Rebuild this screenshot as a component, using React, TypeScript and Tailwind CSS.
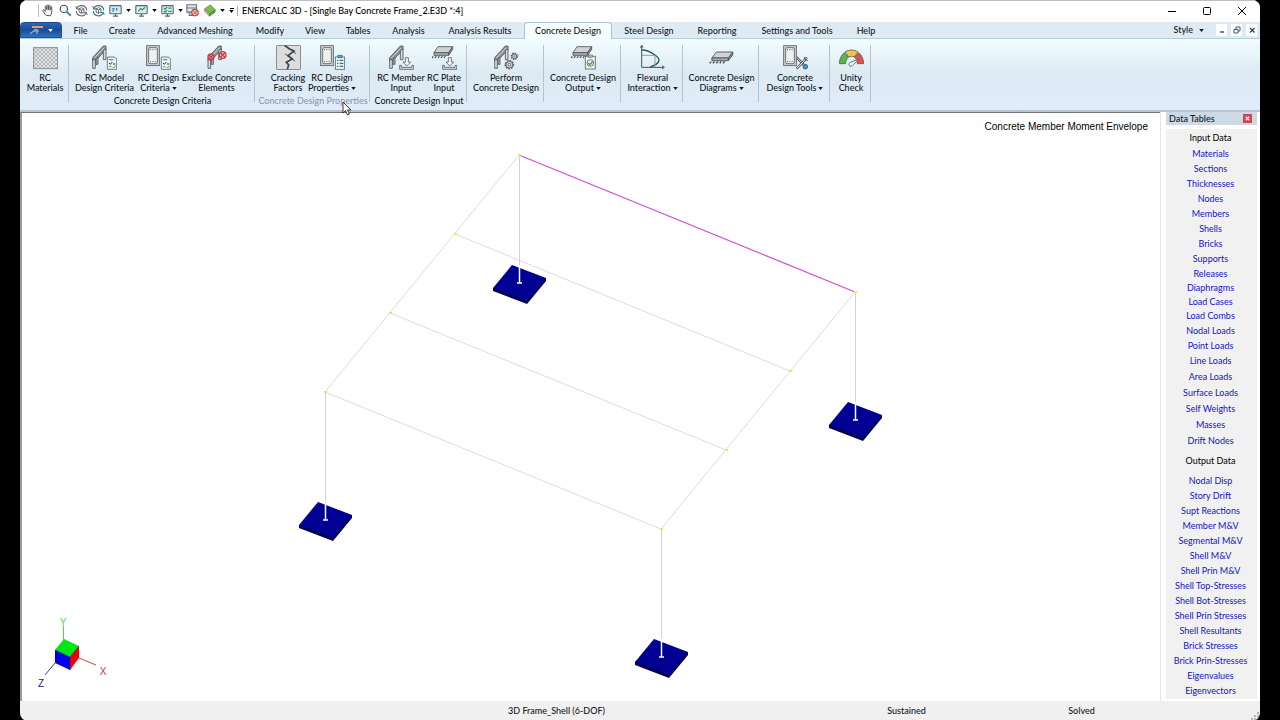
import type { ReactNode } from "react";

/* ---------- Ribbon icons (75 x 75 grid) ---------- */

function RibbonIcon({ children }: { children: ReactNode }) {
  return (
    <svg viewBox="0 0 75 75" className="h-[25px] w-[25px]" fill="none" aria-hidden="true">
      {children}
    </svg>
  );
}

function Frame() {
  return (
    <g stroke="#4d5359" strokeWidth="2.5" strokeLinejoin="round">
      <path d="M2 38 L34 3 H42 V14 L10 48 H2 Z" fill="#8b9299" />
      <path d="M2 44 V70 H10 V44 Z" fill="#d5d8db" />
      <path d="M12 42 V58 H18 V36 Z" fill="#aab0b5" />
      <path d="M34 16 V44 H42 V12 Z" fill="#d5d8db" />
      <path d="M8 38 L37 8" stroke="#dfe3e6" />
    </g>
  );
}

function Slab() {
  return (
    <g stroke="#4d5359" strokeWidth="2.5" strokeLinejoin="round">
      <path d="M18 5 H62 L50 23 H6 Z" fill="#d0d3d6" />
      <path d="M6 23 H50 V31 H6 Z" fill="#a8adb2" />
      <path d="M50 23 L62 5 V13 L50 31 Z" fill="#858b91" />
      <path d="M4 34 L0 39 M13 33 L9 39 M22 33 L18 39 M31 33 L27 39 M40 33 L36 39" strokeWidth="4" />
    </g>
  );
}

function Section() {
  return (
    <g stroke="#5b6066" strokeWidth="2.5">
      <rect x="2" y="2" width="38" height="60" fill="#c9cdd0" />
      <rect x="8" y="8" width="26" height="48" rx="4" fill="#eef0f1" />
      <path d="M12 14 H31 M12 50 H31" strokeDasharray="3 4" strokeWidth="3" />
    </g>
  );
}

function Sheet() {
  return (
    <g stroke="#5d6b6d" strokeWidth="2.5">
      <path d="M46 36 H68 L74 42 V73 H46 Z" fill="#eaf4f0" />
      <path d="M51 44 H64" stroke="#3aa3c2" strokeWidth="4" />
      <path d="M51 54 l4 4 6 -7 M63 57 h7" stroke="#26353c" strokeWidth="3" />
      <path d="M51 65 h7 M62 66 l3 3 6 -7" stroke="#5d9c3b" strokeWidth="3" />
    </g>
  );
}

function Tray() {
  return (
    <g stroke="#5b6066" strokeWidth="2.5" strokeLinejoin="round">
      <path d="M49 38 H58 V51 H65 L53 63 L42 51 H49 Z" fill="#f5f7f8" />
      <path d="M32 61 V73 H74 V61 H69 V67 H37 V61 Z" fill="#d7dbde" />
    </g>
  );
}

function MaterialsIcon() {
  return (
    <RibbonIcon>
      <defs>
        <pattern id="rc-dots" width="12" height="12" patternUnits="userSpaceOnUse">
          <rect width="12" height="12" fill="#e2e3e4" />
          <rect width="6" height="6" fill="#b4b6b8" />
          <rect x="6" y="6" width="6" height="6" fill="#b4b6b8" />
        </pattern>
      </defs>
      <rect x="1" y="8" width="73" height="63" fill="url(#rc-dots)" stroke="#7d8184" strokeWidth="2.5" />
    </RibbonIcon>
  );
}

function ModelCriteriaIcon() {
  return (
    <RibbonIcon>
      <Frame />
      <Sheet />
    </RibbonIcon>
  );
}

function DesignCriteriaIcon() {
  return (
    <RibbonIcon>
      <Section />
      <Sheet />
    </RibbonIcon>
  );
}

function ExcludeIcon() {
  return (
    <RibbonIcon>
      <g transform="translate(10 0)">
        <Frame />
      </g>
      <g stroke="#c93f43" strokeWidth="4" fill="#eec0be" fillOpacity="0.7">
        <circle cx="21" cy="36" r="9" />
        <circle cx="56" cy="30" r="10" />
        <path d="M15 30 l12 12 M27 30 l-12 12 M49 23 l14 14 M63 23 l-14 14" />
      </g>
    </RibbonIcon>
  );
}

function CrackIcon() {
  return (
    <RibbonIcon>
      <rect x="1" y="1" width="73" height="73" rx="4" fill="#dcddde" stroke="#65696d" strokeWidth="2.5" />
      <path d="M26 2 L41 12 L54 18 L36 32 L49 42 L31 52 L38 60 L34 73" stroke="#3c4145" strokeWidth="5" />
      <path d="M50 20 L60 26 M36 32 L27 27 M48 42 L57 48" stroke="#3c4145" strokeWidth="2.5" />
    </RibbonIcon>
  );
}

function PropertiesIcon() {
  return (
    <RibbonIcon>
      <Section />
      <g stroke="#3f6d80" strokeWidth="2.5">
        <rect x="46" y="36" width="28" height="37" fill="#eff6f8" />
        <rect x="54" y="31" width="12" height="7" fill="#6aa8bf" />
        <path d="M51 46 h4 M59 46 h11 M51 55 h4 M59 55 h11 M51 64 h4 M59 64 h11" strokeWidth="4" />
      </g>
    </RibbonIcon>
  );
}

function MemberInputIcon() {
  return (
    <RibbonIcon>
      <Frame />
      <Tray />
    </RibbonIcon>
  );
}

function PlateInputIcon() {
  return (
    <RibbonIcon>
      <Slab />
      <Tray />
    </RibbonIcon>
  );
}

function PerformIcon() {
  return (
    <RibbonIcon>
      <Frame />
      <g stroke="#5b6066" fill="#dfe3e6">
        <circle cx="46" cy="59" r="12" strokeWidth="5" strokeDasharray="5 3" />
        <circle cx="46" cy="59" r="10" strokeWidth="3" />
        <circle cx="46" cy="59" r="4" strokeWidth="3" fill="#fff" />
        <circle cx="61" cy="34" r="9" strokeWidth="5" strokeDasharray="4 3" />
        <circle cx="61" cy="34" r="7" strokeWidth="3" />
        <circle cx="61" cy="34" r="2" strokeWidth="2" fill="#fff" />
      </g>
    </RibbonIcon>
  );
}

function OutputIcon() {
  return (
    <RibbonIcon>
      <Slab />
      <rect x="43" y="34" width="30" height="38" fill="#f1f4f3" stroke="#70777b" strokeWidth="3" />
      <rect x="52" y="30" width="12" height="7" fill="#abb1b5" stroke="#70777b" strokeWidth="2" />
      <circle cx="58" cy="54" r="10" stroke="#53615a" strokeWidth="2.5" />
      <path d="M52 54 l5 5 8 -10" stroke="#3b9a45" strokeWidth="4" />
    </RibbonIcon>
  );
}

function FlexuralIcon() {
  return (
    <RibbonIcon>
      <path d="M5 2 V67 H71" stroke="#43515a" strokeWidth="3" />
      <path d="M1 8 L5 1 L9 8 M66 62 L73 67 L66 72" stroke="#43515a" strokeWidth="3" />
      <path d="M6 15 C24 15 34 22 45 30 C66 45 58 56 31 66" stroke="#29584f" strokeWidth="4" />
      <path d="M6 31 H45 V66" stroke="#83a3ac" strokeWidth="3" />
    </RibbonIcon>
  );
}

function DiagramsIcon() {
  return (
    <RibbonIcon>
      <g transform="translate(2 16) scale(1.12 1)">
        <Slab />
      </g>
    </RibbonIcon>
  );
}

function ToolsIcon() {
  return (
    <RibbonIcon>
      <Section />
      <path d="M42 38 L68 66" stroke="#4f565c" strokeWidth="7" strokeLinecap="round" />
      <path d="M42 38 L68 66" stroke="#d8dcdf" strokeWidth="3" strokeLinecap="round" />
      <path d="M70 40 L43 69" stroke="#4f565c" strokeWidth="7" strokeLinecap="round" />
      <path d="M70 40 L43 69" stroke="#eef1f3" strokeWidth="3" strokeLinecap="round" />
      <circle cx="67" cy="65" r="7" fill="#3f95c4" stroke="#2d5f7d" strokeWidth="2.5" />
      <path d="M64 36 L66 44 L74 47" stroke="#4f565c" strokeWidth="3" />
    </RibbonIcon>
  );
}

function UnityIcon() {
  return (
    <RibbonIcon>
      <g stroke="#57605c" strokeWidth="2.5" strokeLinejoin="round">
        <path d="M1 56 C1 42 7 30 16 23 L28 37 C23 42 20 48 20 56 Z" fill="#53b848" />
        <path d="M18 21 C30 13 45 13 57 21 L46 36 C41 33 34 33 29 36 Z" fill="#f5c646" />
        <path d="M59 23 C68 30 74 42 74 56 H55 C55 48 52 42 47 37 Z" fill="#e2504a" />
        <path d="M60 42 L41 61 A6 6 0 1 1 35 52 Z" fill="#eef1f2" />
      </g>
    </RibbonIcon>
  );
}

/* ---------- Title bar icons (16 x 16 grid) ---------- */

function SmallIcon({ children }: { children: ReactNode }) {
  return (
    <svg viewBox="0 0 16 16" className="h-[13px] w-[13px]" fill="none" aria-hidden="true">
      {children}
    </svg>
  );
}

function HandIcon() {
  return (
    <SmallIcon>
      <path
        d="M5 14 C3 12 2 10 1 8 C1 6.800 2.500 7 4 9 V3.500 C4 2 6 2 6 3.500 V7 V2 C6 .8 8 .8 8 2 V7 V2.600 C8 1.300 10 1.300 10 2.600 V7.500 V4 C10 3 12 3 12 4 V10 C12 12 11 13 10.500 14.500 Z"
        stroke="#555"
        strokeWidth="1.200"
        fill="#f4f4f4"
      />
    </SmallIcon>
  );
}

function ZoomIcon() {
  return (
    <SmallIcon>
      <circle cx="6" cy="6" r="4.500" stroke="#4a4f55" strokeWidth="1.400" fill="#eef6fb" />
      <path d="M9.500 9.500 L14.500 14.500" stroke="#3f8ba8" strokeWidth="2.400" />
    </SmallIcon>
  );
}

function RotateIcon({ color }: { color: string }) {
  return (
    <SmallIcon>
      <path d="M2 6 A6.500 6.500 0 0 1 14.500 8 M14 10.500 A6.500 6.500 0 0 1 1.500 8.500" stroke={color} strokeWidth="1.400" />
      <path d="M1 2.500 L2 6.500 L5.500 5.500 M15 13.500 L14 10 L10.500 11" stroke={color} strokeWidth="1.200" />
      <path d="M5 6 L8 4.500 L11 6 V10 L8 11.500 L5 10 Z M5 6 L8 7.500 L11 6 M8 7.500 V11.500" stroke="#4c5358" strokeWidth="1" />
    </SmallIcon>
  );
}

function ScreenIcon({ children }: { children: ReactNode }) {
  return (
    <SmallIcon>
      <rect x="1" y="2" width="14" height="10" rx="1" fill="#d3ebf0" stroke="#4d6670" strokeWidth="1.300" />
      <path d="M5 15 H11 M8 12 V15" stroke="#4d6670" strokeWidth="1.400" />
      {children}
    </SmallIcon>
  );
}

function NoScreenIcon() {
  return (
    <SmallIcon>
      <path d="M1 1 H13 V10 H1 Z M1 5 H13 M4 10 V14 H9" stroke="#66727a" strokeWidth="1.300" fill="#dfe7ee" />
      <circle cx="11" cy="10.500" r="4" fill="#f2c7c5" stroke="#cf3b3e" strokeWidth="1.500" />
      <path d="M8.500 8 L13.500 13 M13.500 8 L8.500 13" stroke="#cf3b3e" strokeWidth="1.200" />
    </SmallIcon>
  );
}

function BoxIcon() {
  return (
    <SmallIcon>
      <path d="M2 6 L9 1 L15 7 L8 12 Z" fill="#74c14c" stroke="#4e8a35" strokeWidth="0.800" />
      <path d="M2 6 L8 12 V15 L2 9 Z" fill="#e8a08f" stroke="#9a6156" strokeWidth="0.800" />
      <path d="M8 12 L15 7 V10 L8 15 Z" fill="#5a9e3c" stroke="#4e8a35" strokeWidth="0.800" />
    </SmallIcon>
  );
}

function Caret() {
  return (
    <svg viewBox="0 0 6 4" className="inline-block h-[3px] w-[5px] shrink-0" aria-hidden="true">
      <path d="M0 0 H6 L3 4 Z" fill="currentColor" />
    </svg>
  );
}

/* ---------- Data ---------- */

const tabs = [
  { name: "File", width: "w-[37px]" },
  { name: "Create", width: "w-[46px]" },
  { name: "Advanced Meshing", width: "w-[100px]" },
  { name: "Modify", width: "w-[50px]" },
  { name: "View", width: "w-[40px]" },
  { name: "Tables", width: "w-[46px]" },
  { name: "Analysis", width: "w-[55px]" },
  { name: "Analysis Results", width: "w-[88px]" },
  { name: "Concrete Design", width: "w-[88px]" },
  { name: "Steel Design", width: "w-[74px]" },
  { name: "Reporting", width: "w-[62px]" },
  { name: "Settings and Tools", width: "w-[98px]" },
  { name: "Help", width: "w-[40px]" },
];

type Command = { icon: ReactNode; top: string; bottom: string; menu?: boolean; width: string };
type Group = { width: string; pad?: string; label?: string; faded?: boolean; commands: Command[] };

const groups: Group[] = [
  {
    width: "w-[49px]",
    commands: [{ icon: <MaterialsIcon />, top: "RC", bottom: "Materials", width: "w-[46px]" }],
  },
  {
    width: "w-[186px]",
    label: "Concrete Design Criteria",
    commands: [
      { icon: <ModelCriteriaIcon />, top: "RC Model", bottom: "Design Criteria", width: "w-[60px]" },
      { icon: <DesignCriteriaIcon />, top: "RC Design", bottom: "Criteria", menu: true, width: "w-[48px]" },
      { icon: <ExcludeIcon />, top: "Exclude Concrete", bottom: "Elements", width: "w-[68px]" },
    ],
  },
  {
    width: "w-[115px]",
    pad: "pr-[4px]",
    label: "Concrete Design Properties",
    faded: true,
    commands: [
      { icon: <CrackIcon />, top: "Cracking", bottom: "Factors", width: "w-[44px]" },
      { icon: <PropertiesIcon />, top: "RC Design", bottom: "Properties", menu: true, width: "w-[44px]" },
    ],
  },
  {
    width: "w-[97px]",
    label: "Concrete Design Input",
    commands: [
      { icon: <MemberInputIcon />, top: "RC Member", bottom: "Input", width: "w-[50px]" },
      { icon: <PlateInputIcon />, top: "RC Plate", bottom: "Input", width: "w-[36px]" },
    ],
  },
  {
    width: "w-[77px]",
    commands: [{ icon: <PerformIcon />, top: "Perform", bottom: "Concrete Design", width: "w-[70px]" }],
  },
  {
    width: "w-[77px]",
    commands: [{ icon: <OutputIcon />, top: "Concrete Design", bottom: "Output", menu: true, width: "w-[70px]" }],
  },
  {
    width: "w-[62px]",
    commands: [{ icon: <FlexuralIcon />, top: "Flexural", bottom: "Interaction", menu: true, width: "w-[58px]" }],
  },
  {
    width: "w-[76px]",
    commands: [{ icon: <DiagramsIcon />, top: "Concrete Design", bottom: "Diagrams", menu: true, width: "w-[70px]" }],
  },
  {
    width: "w-[71px]",
    commands: [{ icon: <ToolsIcon />, top: "Concrete", bottom: "Design Tools", menu: true, width: "w-[66px]" }],
  },
  {
    width: "w-[41px]",
    commands: [{ icon: <UnityIcon />, top: "Unity", bottom: "Check", width: "w-[36px]" }],
  },
];

const inputTables = [
  {
    line: "leading-[15px]",
    items: ["Materials", "Sections", "Thicknesses", "Nodes", "Members", "Shells", "Bricks", "Supports", "Releases"],
  },
  { line: "leading-[14px]", items: ["Diaphragms", "Load Cases", "Load Combs"] },
  { line: "leading-[15px]", items: ["Nodal Loads", "Point Loads"] },
  {
    line: "leading-[16px]",
    items: ["Line Loads", "Area Loads", "Surface Loads", "Self Weights", "Masses", "Drift Nodes"],
  },
];

const outputTables = [
  "Nodal Disp",
  "Story Drift",
  "Supt Reactions",
  "Member M&V",
  "Segmental M&V",
  "Shell M&V",
  "Shell Prin M&V",
  "Shell Top-Stresses",
  "Shell Bot-Stresses",
  "Shell Prin Stresses",
  "Shell Resultants",
  "Brick Stresses",
  "Brick Prin-Stresses",
  "Eigenvalues",
  "Eigenvectors",
];

const nodes = [
  [519, 155],
  [455, 234],
  [390, 313],
  [325, 392],
  [661, 529],
  [726, 450],
  [790, 371],
  [855, 292],
];

const columns = [
  [519, 155],
  [325, 392],
  [661, 529],
  [855, 292],
];

/* ---------- Page parts ---------- */

function TitleBar() {
  return (
    <header className="flex h-[22px] items-center border-t border-[#bdbdc2] bg-white pb-[2px] text-black">
      <div className="ml-[18px] flex items-center border-l border-[#b9b9b9] pl-[3px]">
        <button aria-label="Pan"><HandIcon /></button>
        <button aria-label="Zoom" className="ml-[4px]"><ZoomIcon /></button>
        <button aria-label="Rotate" className="ml-[3px]"><RotateIcon color="#6b7075" /></button>
        <button aria-label="Rotate model" className="ml-[4px]"><RotateIcon color="#2f7f96" /></button>
        <button aria-label="Display" className="ml-[4px] flex items-center gap-[4px]">
          <ScreenIcon>
            <path d="M4 6 H7 M9.500 5 V8 M4 8.500 H6" stroke="#2d6f8a" strokeWidth="1.500" />
          </ScreenIcon>
          <Caret />
        </button>
        <button aria-label="Loads" className="ml-[4px] flex items-center gap-[4px]">
          <ScreenIcon>
            <path d="M4 9 L7 5.500 L9 7 L12.500 4" stroke="#2f9170" strokeWidth="1.500" />
          </ScreenIcon>
          <Caret />
        </button>
        <button aria-label="Results" className="ml-[4px] flex items-center gap-[4px]">
          <ScreenIcon>
            <path d="M3.500 5 l1.500 1.500 2.500 -3 M9 5 h4 M3.500 9 l1.500 1 2.500 -2.500 M9 9 h4" stroke="#2f9a3e" strokeWidth="1.500" />
          </ScreenIcon>
          <Caret />
        </button>
        <button aria-label="Clear" className="ml-[3px]"><NoScreenIcon /></button>
        <button aria-label="Render" className="ml-[4px] flex items-center gap-[4px]">
          <BoxIcon />
          <Caret />
        </button>
        <button aria-label="Customize" className="ml-[4px] flex flex-col items-center gap-px">
          <span className="h-px w-[4px] bg-black" />
          <Caret />
        </button>
      </div>
      <h1 className="ml-[3px] border-l border-[#a9a9a9] pl-[4px] leading-[10px] whitespace-nowrap">
        ENERCALC 3D - [Single Bay Concrete Frame_2.E3D *:4]
      </h1>
      <div className="ml-auto flex pr-px">
        <button aria-label="Minimize" className="flex w-[35px] items-center justify-center">
          <svg viewBox="0 0 8 8" className="h-[8px] w-[8px]"><path d="M0 4.500 H8" stroke="#000" /></svg>
        </button>
        <button aria-label="Maximize" className="flex w-[35px] items-center justify-center">
          <svg viewBox="0 0 8 8" className="h-[8px] w-[8px]"><rect x="0.500" y="0.500" width="7" height="7" rx="1" fill="none" stroke="#000" /></svg>
        </button>
        <button aria-label="Close" className="flex w-[35px] items-center justify-center">
          <svg viewBox="0 0 8 8" className="h-[8px] w-[8px]"><path d="M0 0 L8 8 M8 0 L0 8" stroke="#000" /></svg>
        </button>
      </div>
    </header>
  );
}

function TabBar() {
  return (
    <nav className="flex h-[17px] border-b border-[#b4cdd8] bg-[#dfebf4]">
      <button aria-label="Application menu" className="flex h-[16px] w-[42px] items-center justify-center gap-[4px] rounded-t-sm border border-[#1d4d94] bg-gradient-to-b from-[#2f62ad] via-[#174c9a] to-[#2f74c0] text-white">
        <svg viewBox="0 0 14 10" className="h-[10px] w-[14px]" aria-hidden="true">
          <path d="M2 1 H13 V3 H2 Z" fill="#e79a62" />
          <path d="M0 9 L6 4 M3 6 H9 M7 9 V4" stroke="#8fa3bd" strokeWidth="1.500" />
        </svg>
        <Caret />
      </button>
      <div role="tablist" className="flex">
        {tabs.map(({ name, width }) => (
          <button
            key={name}
            role="tab"
            aria-selected={name === "Concrete Design"}
            className={`h-[17px] text-center whitespace-nowrap ${width} ${
              name === "Concrete Design"
                ? "rounded-t-sm border border-b-0 border-[#a9c3d0] bg-[#f6fdff] leading-[16px]"
                : "leading-[18px]"
            }`}
          >
            {name}
          </button>
        ))}
      </div>
      <div className="ml-auto flex items-center gap-[3px] pr-[3px]">
        <button className="mr-[9px] flex items-center gap-[6px]">
          Style
          <Caret />
        </button>
        <button aria-label="Minimize window" className="flex h-[12px] w-[11px] items-center justify-center bg-white">
          <svg viewBox="0 0 8 8" className="h-[8px] w-[8px]"><path d="M2 6 H6" stroke="#456" strokeWidth="1.500" /></svg>
        </button>
        <button aria-label="Restore window" className="ml-px flex h-[12px] w-[11px] items-center justify-center bg-white">
          <svg viewBox="0 0 8 8" className="h-[8px] w-[8px]"><path d="M1 3.500 H5 V7 H1 Z M3 3 V1 H7 V5 H5" stroke="#456" fill="none" /></svg>
        </button>
        <button aria-label="Close window" className="ml-px flex h-[12px] w-[11px] items-center justify-center bg-white">
          <svg viewBox="0 0 8 8" className="h-[8px] w-[8px]"><path d="M2 2 L6.500 6.500 M6.500 2 L2 6.500" stroke="#345" strokeWidth="1.300" /></svg>
        </button>
      </div>
    </nav>
  );
}

function Ribbon() {
  return (
    <div className="flex h-[73px] border-b-2 border-[#b3c4d4] bg-gradient-to-b from-[#f2fdff] via-[#dde9f3] to-[#e0edf9] pt-[6px] pb-[8px]">
      {groups.map((group, i) => (
        <section key={i} className={`flex shrink-0 flex-col border-r border-[#b3c3cf] ${group.width}`}>
          <div className={`flex justify-center ${group.pad ?? "pl-[2px]"}`}>
            {group.commands.map((c) => (
              <button key={c.top} className={`flex flex-col items-center leading-[10px] whitespace-nowrap ${c.width}`}>
                {c.icon}
                <span className="mt-[3px]">{c.top}</span>
                <span className="flex items-center gap-[2px]">
                  {c.bottom}
                  {c.menu && <Caret />}
                </span>
              </button>
            ))}
          </div>
          {group.label && (
            <p className={`mt-[3px] pl-[2px] text-center leading-[10px] whitespace-nowrap ${group.faded ? "text-[#8c9aa6]" : ""}`}>
              {group.label}
            </p>
          )}
        </section>
      ))}
    </div>
  );
}

function ModelView() {
  return (
    <main className="relative min-w-0 flex-1 border-t border-l-2 border-t-[#6f757b] border-l-[#9a9a9a] bg-white font-['Liberation_Sans',sans-serif]">
      <p className="absolute top-[6px] right-[12px] text-[10px] text-black">Concrete Member Moment Envelope</p>
      <svg viewBox="22 113 1138 588" className="h-full w-full" fill="none">
        {/* Beams */}
        <g stroke="#dcdcdc">
          <path d="M519 155 L325 392 L661 529 L855 292" />
          <path d="M455 234 L790 371 M390 313 L726 450" />
        </g>
        <path d="M519 155 L855 292" stroke="#d44fd0" strokeWidth="1.300" />

        {/* Footings */}
        {columns.map(([x, y]) => (
          <g key={x} transform={`translate(${x} ${y + 129})`}>
            <path d="M-26 4 V7 L8 20 L27 -3 V-6 Z" fill="#00004c" />
            <path d="M-7 -19 L27 -6 L8 17 L-26 4 Z" fill="#000092" />
            <path d="M0.500 -129 V-19" stroke="#d2d2d2" />
            <path d="M0.500 -19 V-1 M-2 -1 H3" stroke="#fff" strokeWidth="1.500" />
          </g>
        ))}

        {/* Nodes */}
        {nodes.map(([x, y]) => (
          <rect key={`${x}-${y}`} x={x - 1} y={y - 1} width="3" height="2" fill="#f0e94a" />
        ))}

        {/* Axis cube */}
        <path d="M63.500 640 V626" stroke="#4fd35a" />
        <path d="M79 658 L96 665" stroke="#c0454d" />
        <path d="M55 663 L45 675" stroke="#3b3b92" />
        <path d="M64 639 L79 646 L70 657 L55 650 Z" fill="#00e813" />
        <path d="M55 650 L70 657 V670 L55 663 Z" fill="#0000e8" />
        <path d="M70 657 L79 646 V658 L70 670 Z" fill="#f00008" />
        <path d="M55 650 L70 657 L79 646 M70 657 V670" stroke="#10304a" strokeWidth="0.600" />
        <g fontSize="10" textAnchor="middle">
          <text x="63" y="626" fill="#4fd35a">Y</text>
          <text x="103" y="675" fill="#c0353d">X</text>
          <text x="41" y="687" fill="#1f1f70">Z</text>
        </g>
      </svg>
    </main>
  );
}

function DataTables() {
  return (
    <aside className="flex w-[100px] shrink-0 flex-col border-l border-[#e4e4e4] bg-white pr-[3px] pb-[2px] pl-[5px]">
      <div className="flex h-[13px] items-center justify-between bg-[#cddae6] pr-[5px] pl-[3px]">
        <h2 className="leading-[12px]">Data Tables</h2>
        <button aria-label="Close panel" className="flex h-[9px] w-[9px] items-center justify-center bg-[#c9474f]">
          <svg viewBox="0 0 8 8" className="h-[7px] w-[7px]"><path d="M2 2 L6 6 M6 2 L2 6" stroke="#fff" strokeWidth="1.300" /></svg>
        </button>
      </div>
      <div className="mt-[4px] flex-1 bg-[#f1f1f1] pr-[2px] text-center font-normal text-[#1414c4]">
        <h3 className="pt-[1px] leading-[16px] text-black">Input Data</h3>
        {inputTables.map(({ line, items }) => (
          <ul key={items[0]} className={line}>
            {items.map((item) => (
              <li key={item}><a href="#">{item}</a></li>
            ))}
          </ul>
        ))}
        <h3 className="pt-[4px] pb-[4px] leading-[16px] text-black">Output Data</h3>
        <ul className="leading-[15px]">
          {outputTables.map((item) => (
            <li key={item}><a href="#">{item}</a></li>
          ))}
        </ul>
      </div>
    </aside>
  );
}

export default function App() {
  return (
    <div className="min-h-screen bg-black px-5 font-['Lato','Noto_Sans',sans-serif] text-[9px] font-medium text-[#101820]">
      <div className="relative flex min-h-screen flex-col overflow-hidden rounded-lg bg-[#f0f0f0]">
        <TitleBar />
        <TabBar />
        <Ribbon />
        <div className="flex flex-1">
          <ModelView />
          <DataTables />
        </div>
        <footer className="flex h-[20px] shrink-0 items-center text-center">
          <p className="flex-1 pl-[274px]">3D Frame_Shell (6-DOF)</p>
          <p className="w-[175px]">Sustained</p>
          <p className="w-[175px]">Solved</p>
          <svg viewBox="0 0 10 10" className="ml-[81px] h-[10px] w-[10px] self-end" aria-hidden="true">
            <path d="M7 1 h2 v2 h-2 Z M4 4 h2 v2 h-2 Z M7 4 h2 v2 h-2 Z M1 7 h2 v2 h-2 Z M4 7 h2 v2 h-2 Z M7 7 h2 v2 h-2 Z" fill="#b5b5b5" />
          </svg>
        </footer>

        {/* Mouse pointer */}
        <svg viewBox="0 0 10 15" className="absolute top-[101px] left-[322px] h-[15px] w-[10px]" aria-hidden="true">
          <path d="M1 1 V12 L3.500 9.500 L5.500 14 L7.500 13 L5.500 9 H9 Z" fill="#fff" stroke="#222" strokeWidth="0.900" />
        </svg>
      </div>
    </div>
  );
}
